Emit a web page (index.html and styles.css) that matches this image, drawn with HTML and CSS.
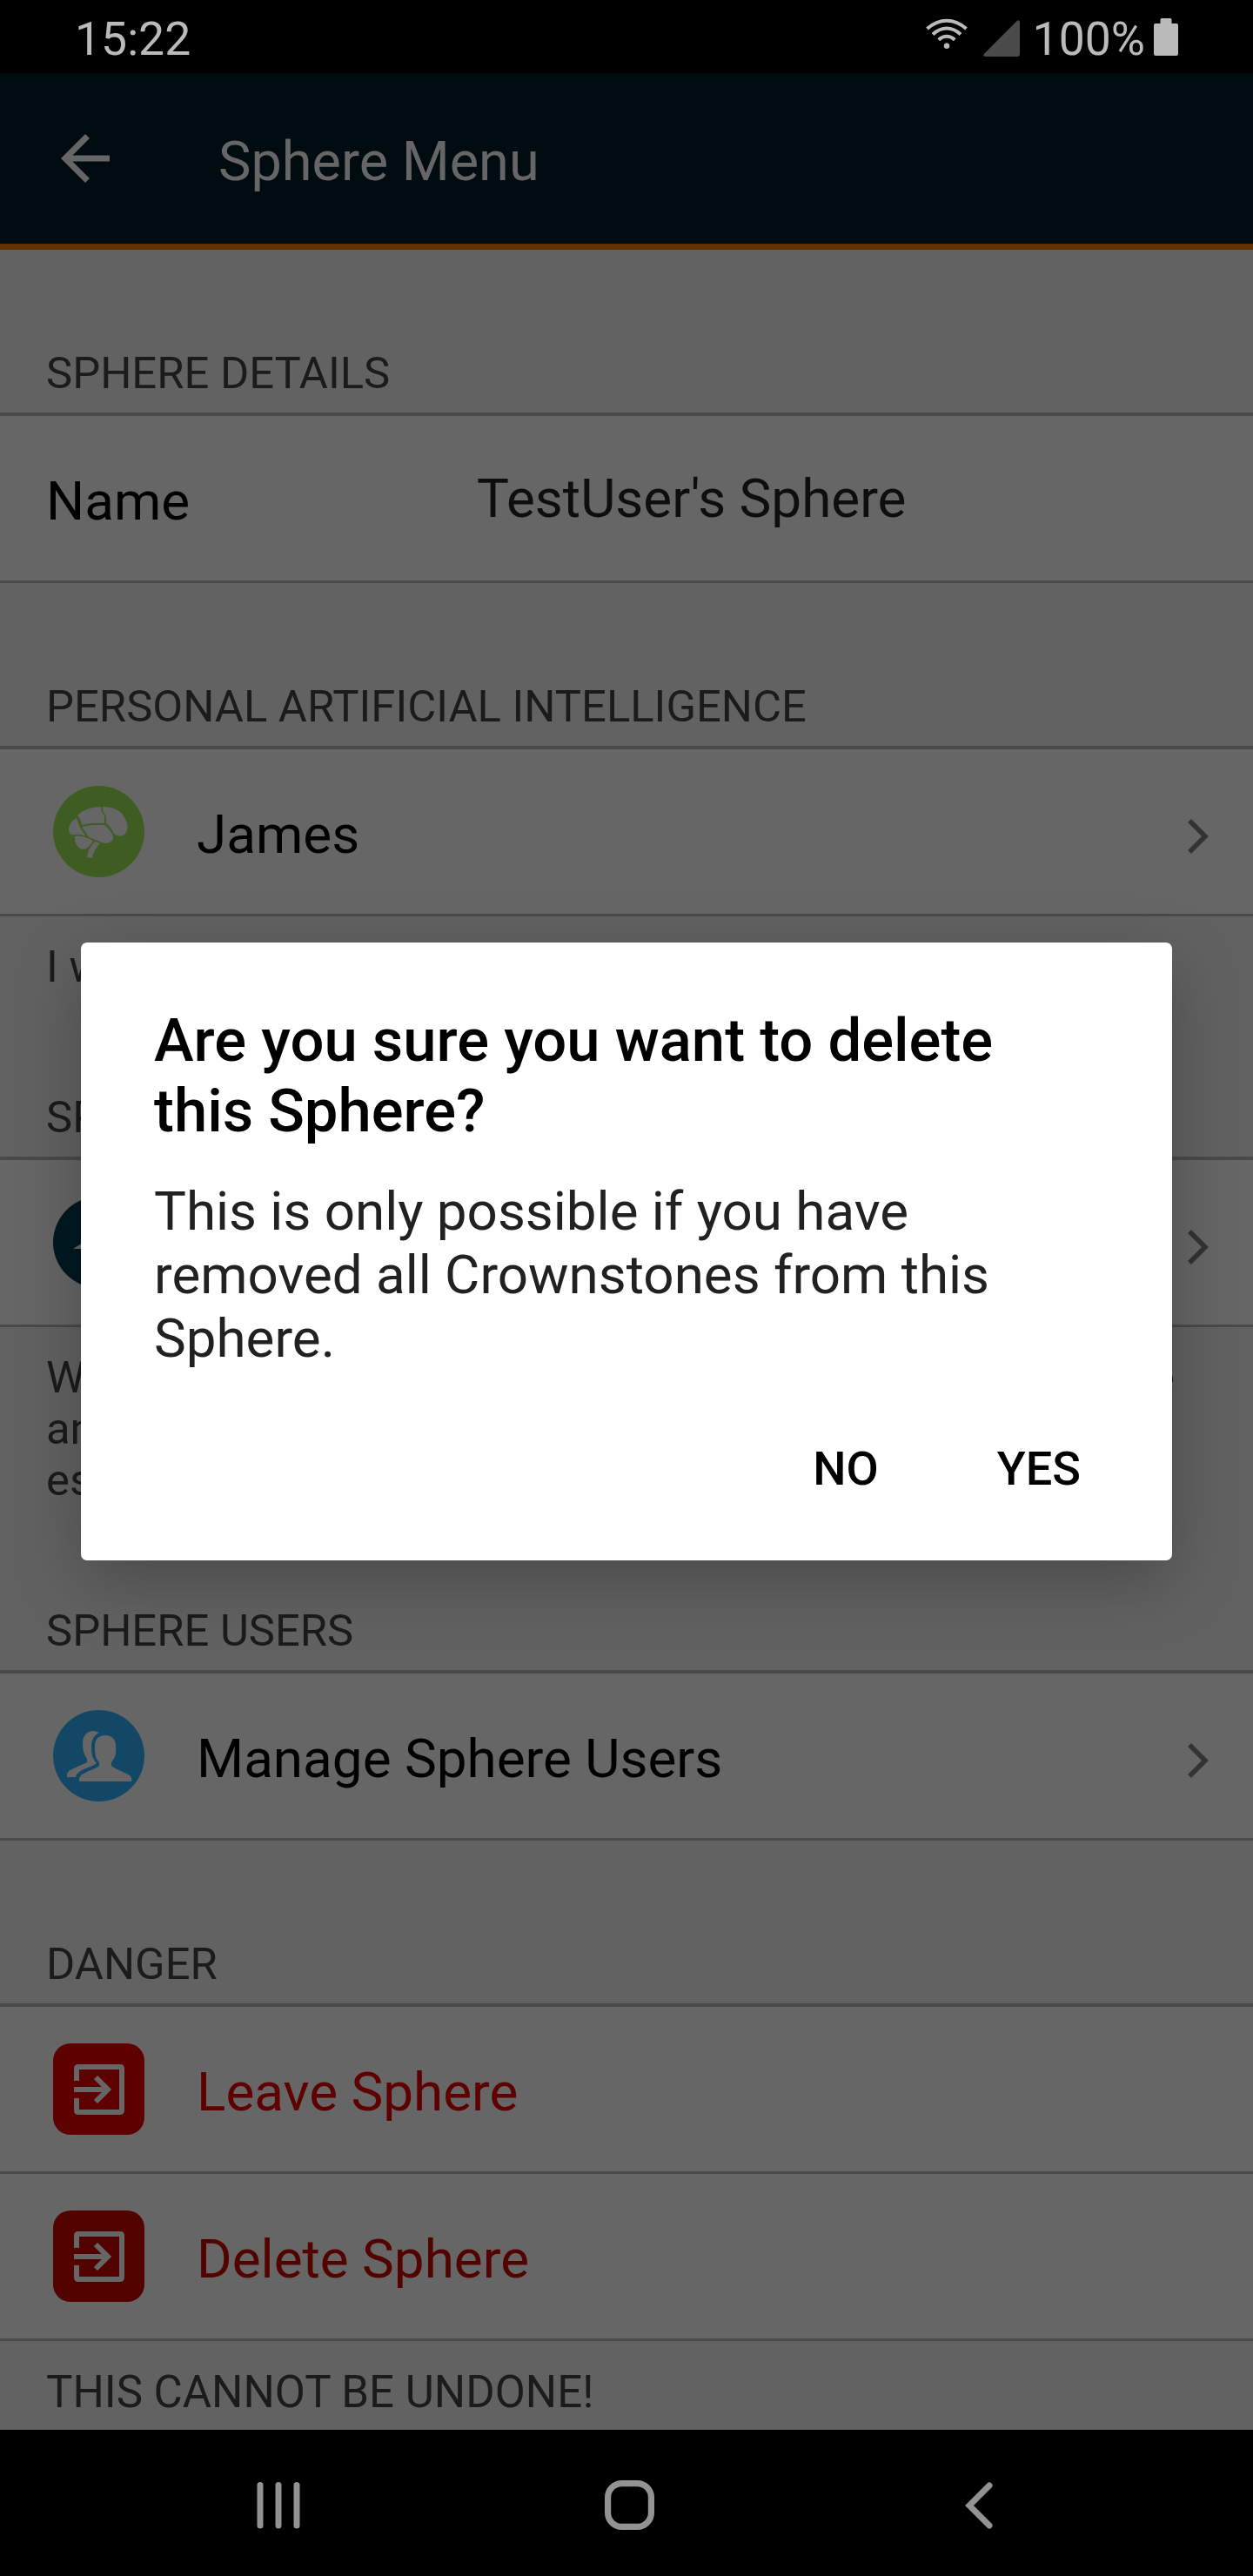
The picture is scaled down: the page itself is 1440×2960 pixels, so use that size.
FILE: index.html
```html
<!DOCTYPE html>
<html lang="en">
<head>
<meta charset="utf-8">
<title>Sphere Menu</title>
<link rel="stylesheet" href="styles.css">
</head>
<body>
<div class="screen">
  <div class="status">
    <span class="clock">15:22</span>
    <svg class="wifi" width="48" height="36" viewBox="0 0 48 36" fill="none" stroke="#bababa" stroke-width="4"><path d="M1.5 12Q12 2.700 24 2.700T46.500 12M8 18.500Q15.500 11.500 24 11.500T40 18.500M14.700 24.700Q19 20.700 24 20.700T33.300 24.700"/><circle cx="24" cy="31.800" r="3.200" fill="#bababa" stroke="none"/></svg>
    <svg class="signal" width="42" height="42" viewBox="0 0 42 42" fill="#4b4b4b"><path d="M39 .8Q42-1 42 3V39Q42 42 39 42H3Q-1 42 .8 39Z"/></svg>
    <span class="percent">100%</span>
    <svg class="battery" width="28" height="43" viewBox="0 0 28 43" fill="#bababa"><path d="M9 0H19Q20.500 0 20.500 1.500V6H26Q28 6 28 8V41Q28 43 26 43H2Q0 43 0 41V8Q0 6 2 6H7.500V1.500Q7.500 0 9 0Z"/></svg>
  </div>
  <header class="bar">
    <svg class="back" width="84" height="84" viewBox="0 0 24 24" fill="#666"><path d="M20 11H7.830l5.590-5.590L12 4l-8 8 8 8 1.410-1.410L7.830 13H20v-2z"/></svg>
    <h1>Sphere Menu</h1>
  </header>
  <main class="list">
    <h2>SPHERE DETAILS</h2>
    <div class="row first"><span class="label">Name</span><span class="value">TestUser's Sphere</span></div>
    <h2>PERSONAL ARTIFICIAL INTELLIGENCE</h2>
    <div class="row first">
      <svg class="icon" viewBox="0 0 105 105"><circle cx="52.500" cy="52.500" r="52.500" fill="#3f5d23"/><g fill="#666"><path d="M28 34Q38 24 55 24Q55 30 59 34L59 43Q45 42 33 45Q32 38 28 34Z"/><path d="M57 24Q75 24 82 36Q89 49 82 56Q76 60 70 55Q67 48 61 43Q62 34 57 29Z"/><path d="M27 37Q18 42 18 51Q19 57 24 56Q31 55 38 58L31 48Z"/><path d="M33 47Q46 44 59 45Q70 54 69 61Q65 68 56 65L41 59Z"/><path d="M25 58Q35 57 46 63Q41 73 33 73Q24 69 25 58Z"/><path d="M48 64L54 66Q46 74 45 83L39 82Q40 72 48 64Z"/></g></svg>
      <span class="label">James</span>
      <svg class="chevron" width="24" height="40" viewBox="0 0 24 40"><path d="M2 2L20 20L2 38" fill="none" stroke="#333" stroke-width="5.600"/></svg>
    </div>
    <p class="note one">I will do my best.</p>
    <h2>SPHERE SETTINGS</h2>
    <div class="row first">
      <svg class="icon" viewBox="0 0 105 105"><circle cx="52.500" cy="52.500" r="52.500" fill="#001920"/><path d="M23 60L50 43L80 60Z" fill="#666"/></svg>
      <span class="label">Behaviour</span>
      <svg class="chevron" width="24" height="40" viewBox="0 0 24 40"><path d="M2 2L20 20L2 38" fill="none" stroke="#333" stroke-width="5.600"/></svg>
    </div>
    <p class="note three"><span class="wide">What should be done when people arrive here</span>and when they leave again, and other<br>essential options.</p>
    <h2>SPHERE USERS</h2>
    <div class="row first">
      <svg class="icon" viewBox="0 0 105 105"><circle cx="52.500" cy="52.500" r="52.500" fill="#124766"/><g fill="#666"><path d="M60 29C68 29 72 34 72 41C73 51 71 55 67 60V64C71 68 82 71 88 75Q91 77 90 82H30V79C31 74 35 73 39 71C45 68 50 67 53 64V60C48 55 48 48 48 41C48 33 53 29 60 29Z"/><path d="M53 26C46 29 44 36 44 43C44 52 46 57 50 61C45 65 36 67 30 71Q27 73 26 77H16V74C17 69 22 68 26 66C31 63 36 62 39 60V56C35 50 34 45 34 38C34 25 45 21 53 26Z"/></g></svg>
      <span class="label">Manage Sphere Users</span>
      <svg class="chevron" width="24" height="40" viewBox="0 0 24 40"><path d="M2 2L20 20L2 38" fill="none" stroke="#333" stroke-width="5.600"/></svg>
    </div>
    <h2>DANGER</h2>
    <div class="row first leave">
      <svg class="icon" viewBox="0 0 105 105"><rect width="105" height="105" rx="20" fill="currentColor"/><path d="M27 43V29Q27 27 29 27H77Q79 27 79 29V77Q79 79 77 79H29Q27 79 27 77V63M24 53H61M49 39L63 53L49 67" fill="none" stroke="#666" stroke-width="6"/></svg>
      <span class="label">Leave Sphere</span>
    </div>
    <div class="row delete">
      <svg class="icon" viewBox="0 0 105 105"><rect width="105" height="105" rx="20" fill="currentColor"/><path d="M27 43V29Q27 27 29 27H77Q79 27 79 29V77Q79 79 77 79H29Q27 79 27 77V63M24 53H61M49 39L63 53L49 67" fill="none" stroke="#666" stroke-width="6"/></svg>
      <span class="label">Delete Sphere</span>
    </div>
    <p class="note last">THIS CANNOT BE UNDONE!</p>
  </main>
  <nav class="nav">
    <svg width="50" height="54" viewBox="0 0 50 54" fill="none" stroke="#929292" stroke-width="7" stroke-linecap="round"><path d="M4 3.500V50M25 3.500V50M46 3.500V50"/></svg>
    <svg class="home" width="57" height="57" viewBox="0 0 57 57" fill="none" stroke="#929292" stroke-width="7.200"><rect x="3.600" y="3.600" width="49.800" height="49.800" rx="16"/></svg>
    <svg width="32" height="54" viewBox="0 0 32 54" fill="none" stroke="#929292" stroke-width="7" stroke-linecap="round"><path d="M28 4L5 27L28 50"/></svg>
  </nav>
  <section class="dialog">
    <h3>Are you sure you want to delete<br>this Sphere?</h3>
    <p>This is only possible if you have<br>removed all Crownstones from this<br>Sphere.</p>
    <div class="actions"><button>NO</button><button>YES</button></div>
  </section>
</div>
</body>
</html>
```
FILE: styles.css
```css
* { box-sizing: border-box; margin: 0; padding: 0; }
body { background: #000; font-family: Roboto, sans-serif; }
.screen { position: relative; width: 1440px; height: 2960px; display: flex; flex-direction: column; overflow: hidden; }
h1, h2 { font-weight: 400; }
svg { display: block; flex: none; }

.status { height: 84px; display: flex; align-items: flex-start; padding: 0 86px 0 86px; color: #bababa; font-size: 53.5px; line-height: 89px; }
.clock { margin-right: auto; }
.wifi { margin: 21px 18px 0 0; }
.signal { margin: 23px 15px 0 0; }
.percent { margin-right: 10px; }
.battery { margin-top: 21px; }

.bar { height: 203px; display: flex; align-items: center; background: #000c10; border-bottom: 7px solid #613100; color: #666; padding-left: 56px; }
.bar h1 { margin-left: 111px; font-size: 63px; line-height: 74px; padding-top: 7px; }

.list { height: 2505px; background: #626262; color: #1b1b1b; overflow: hidden; }
.list h2, .note { font-size: 50.75px; line-height: 59px; padding-left: 53px; }
.list h2 { height: 187px; padding-top: 112px; }
.row { height: 192px; display: flex; align-items: center; background: #666; border-bottom: 3px solid #4a4a4a; padding: 0 51px 0 61px; font-size: 62px; color: #000; }
.row.first { height: 196px; border-top: 4px solid #4a4a4a; }
.row .label { line-height: 74px; padding-top: 7px; }
.icon { width: 105px; height: 105px; margin-right: 60px; }
.icon + .label { flex: 1; }
.row > .label:first-child { width: 495px; margin-left: -8px; }
.value { color: #0e0e0e; line-height: 74px; padding-top: 1px; }
.chevron { margin-top: 11px; }
.row.leave { color: #5e0000; }
.row.delete { color: #520300; }
.note { padding-top: 28px; white-space: nowrap; }
.note.one { height: 89px; }
.note.three { height: 207px; }
.note.last { padding-top: 29px; font-size: 51px; }
.wide { display: block; width: 1297px; white-space: normal; text-align-last: justify; }

.nav { height: 168px; display: flex; align-items: center; justify-content: space-between; background: #000; padding: 5px 299px 0 295px; }
.home { margin-right: 8px; }

.dialog { position: absolute; left: 93px; top: 1083px; width: 1254px; height: 710px; background: #fff; border-radius: 7px; padding: 72px 84px 0; box-shadow: 0 24px 80px rgba(0, 0, 0, .25); }
.dialog h3 { font-size: 68.8px; font-weight: 500; line-height: 81px; color: #000; white-space: nowrap; }
.dialog p { font-size: 61.9px; line-height: 73px; color: #212121; margin-top: 39px; white-space: nowrap; }
.actions { display: flex; justify-content: flex-end; gap: 136px; margin-top: 83px; padding-right: 21px; }
.actions button { border: 0; background: none; font: 500 54px/60px Roboto, sans-serif; color: #000; }
```
